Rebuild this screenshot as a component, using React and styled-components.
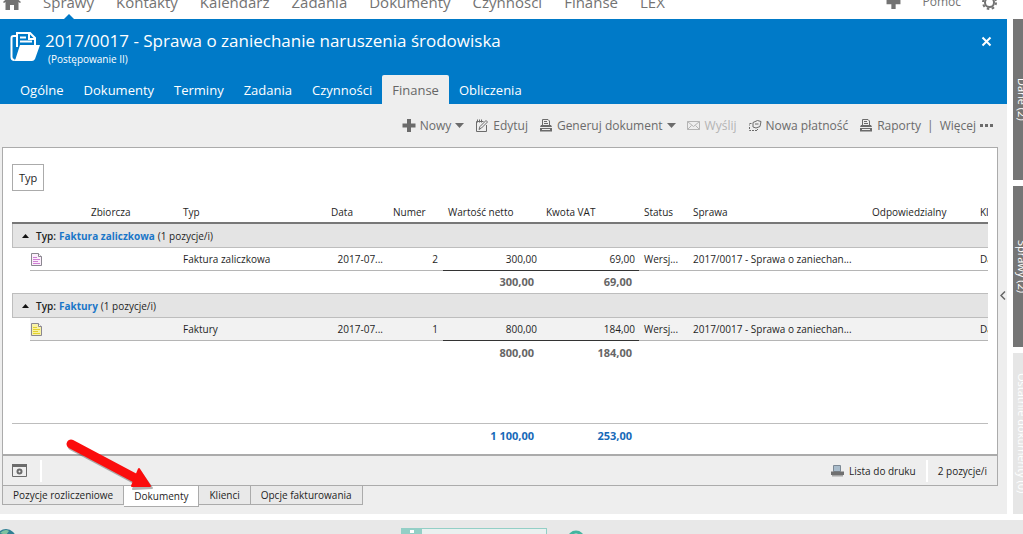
import React, { useState } from 'react'
import styled, { createGlobalStyle, css } from 'styled-components';

const GlobalStyle = createGlobalStyle`
    * { box-sizing: border-box; }
    html, body { margin: 0; background: #fff; overflow: hidden; }
    body { font-family: 'Open Sans', 'Noto Sans', sans-serif; font-size: 10px; line-height: 16px; color: #1e1e1e; }
    button { font: inherit; color: inherit; background: none; border: 0; padding: 0; white-space: nowrap; cursor: pointer; }
    svg { display: block; flex: none; }
`;

const TopBar = styled.header`
    display: flex;
    align-items: center;
    justify-content: space-between;
    height: 34px;
    margin-top: -15px;
    padding: 0 26px 0 3px;
    line-height: 20px;
    color: #737373;
`;

const TopGroup = styled.nav`
    display: flex;
    align-items: center;
    gap: ${(props) => props.$gap}px;
    font-size: ${(props) => props.$size}px;
`;

const TopLink = styled.a`
    position: relative;
    color: inherit;
    text-decoration: none;
    ${(props) => props.$active && css`
        &::after {
            content: '';
            position: absolute;
            left: 50%;
            bottom: -7px;
            margin-left: -5px;
            border: 5px solid transparent;
            border-top: 0;
            border-bottom-color: #007ac8;
        }
    `}
`;

const Columns = styled.div`
    display: flex;
    gap: 6px;
`;

const Main = styled.main`
    flex: 1;
    min-width: 0;
    display: flex;
    flex-direction: column;
    background: #eeeeee;
`;

const CaseHeader = styled.div`
    display: flex;
    flex-direction: column;
    justify-content: space-between;
    height: 85px;
    padding: 12px 15px 0 10px;
    background: #007ac8;
    color: #fff;
`;

const TitleRow = styled.div`
    display: flex;
    gap: 5px;
`;

const TitleText = styled.div`
    flex: 1;
    h1 { margin: 0; font-size: 17px; line-height: 20px; font-weight: 400; }
    p { margin: 0; padding-left: 3px; line-height: 16px; }
`;

const CloseButton = styled.button`
    align-self: flex-start;
    padding: 5px 0;
`;

const CaseTabs = styled.nav`
    display: flex;
`;

const CaseTab = styled.button`
    height: 29px;
    padding: 0 10px;
    font-size: 13px;
    border-radius: 2px 2px 0 0;
    background: ${(props) => (props.$active ? '#eeeeee' : 'transparent')};
    color: ${(props) => (props.$active ? '#666' : '#fff')};
`;

const Body = styled.div`
    flex: 1;
    display: flex;
`;

const Work = styled.div`
    flex: 1;
    min-width: 0;
    display: flex;
    flex-direction: column;
    padding-left: 2px;
`;

const Gutter = styled.button`
    display: flex;
    align-items: center;
    justify-content: center;
    width: 9px;
    color: #666;
`;

const Toolbar = styled.div`
    display: flex;
    align-items: center;
    justify-content: flex-end;
    gap: 11px;
    height: 43px;
    padding-right: 5px;
    font-size: 12px;
    color: #6b6b6b;
`;

const ToolButton = styled.button`
    display: flex;
    align-items: center;
    gap: 4px;
    &:disabled { color: #b4b4b4; }
`;

const ToolMore = styled.div`
    display: flex;
    gap: 6px;
    margin-left: -5px;
`;

const Panel = styled.section`
    flex: 1;
    display: flex;
    flex-direction: column;
    border: 1px solid #ababab;
`;

const GridArea = styled.div`
    flex: 1;
    padding: 16px 9px 7px;
    background: #fff;
    border-bottom: 2px solid #ababab;
`;

const GroupButton = styled.button`
    height: 27px;
    padding: 0 6px;
    font-size: 11px;
    border: 1px solid #ababab;
`;

const TableClip = styled.div`
    margin-top: 11px;
    overflow: hidden;
`;

const Table = styled.table`
    width: 100%;
    min-width: 1064px;
    table-layout: fixed;
    border-spacing: 0;
    td, th { padding: 0 5px; white-space: nowrap; overflow: hidden; }
`;

const Head = styled.th`
    height: 22px;
    text-align: left;
    font-weight: 400;
    border-bottom: 2px solid #777;
`;

const GroupCell = styled.td`
    height: 24px;
    background: #e4e4e4;
    border: solid #bdbdbd;
    border-width: 0 0 1px 1px;
    button { display: flex; align-items: center; gap: 3px; padding-left: 4px; }
    svg { margin-right: 4px; }
    strong { font-weight: 600; }
    em { font-style: normal; font-weight: 700; color: #1a76c8; }
`;

const Cell = styled.td`
    height: 23px;
    text-align: ${(props) => (props.$right ? 'right' : 'left')};
    background: ${(props) => (props.$alt ? '#f2f2f2' : 'transparent')};
    border-bottom: 1px solid ${(props) => (props.$sum ? '#333' : '#b5b5b5')};
    && { padding-right: ${(props) => (props.$sum ? 4 : 5)}px; }
`;

const IconCell = styled(Cell)`
    && { padding-left: 1px; }
`;

const Blank = styled.td`
    height: ${(props) => props.$height || 23}px;
    border-bottom: ${(props) => (props.$line ? '1px solid #bdbdbd' : '0')};
`;

const SumCell = styled.td`
    height: 23px;
    && { padding-right: 7px; }
    text-align: right;
    font-size: 11px;
    font-weight: 700;
    color: ${(props) => (props.$total ? '#1769b8' : '#666')};
    border-bottom: ${(props) => (props.$line ? '1px solid #bdbdbd' : '0')};
`;

const StatusBar = styled.footer`
    display: flex;
    align-items: center;
    height: 29px;
    padding: 0 10px 0 9px;
`;

const Divider = styled.span`
    width: 2px;
    height: 22px;
    margin: 0 ${(props) => props.$right || 0}px 0 ${(props) => props.$left}px;
    background: #fff;
`;

const PrintLink = styled.button`
    display: flex;
    align-items: center;
    gap: 5px;
    margin-left: auto;
`;

const BottomTabs = styled.nav`
    position: relative;
    display: flex;
    align-items: flex-start;
    height: 28px;
    padding-left: 2px;
`;

const BottomTab = styled.button`
    height: ${(props) => (props.$active ? 21 : 19)}px;
    padding: 0 10px;
    border: solid #ababab;
    border-width: 0 1px 1px 0;
    background: ${(props) => (props.$active ? '#fff' : '#e9e9e9')};
    &:first-child { border-left-width: 1px; }
`;

const Pointer = styled.svg`
    position: absolute;
    left: 62px;
    bottom: 22px;
    pointer-events: none;
`;

const Side = styled.aside`
    display: flex;
    flex-direction: column;
    gap: 6px;
    width: 10px;
    overflow: hidden;
`;

const SideTab = styled.button`
    flex: 1;
    width: 18px;
    writing-mode: vertical-rl;
    font-size: 11px;
    background: ${(props) => (props.disabled ? '#e6e6e6' : '#757575')};
    color: #fff;
    text-align: center;
`;

const Footer = styled.footer`
    display: flex;
    height: 14px;
    margin-top: 6px;
    padding-top: 8px;
    background: #e8e8e8;
    overflow: hidden;
`;

const InfoBox = styled.div`
    width: 146px;
    height: 20px;
    margin: 0 20px 0 385px;
    border: 1px solid #93cfc6;
    background: #eaf1f0;
`;

const Icon = ({ name, width = 14, height = 13 }) => {
    const shapes = {
        plus: <path d="M5 0h4v4.500h4.500v4H9V13H5V8.500H.5v-4H5z" fill="currentColor" />,
        edit: (
            <g fill="none" stroke="currentColor">
                <path d="M11.500 6v6.500H1.500v-10h7" />
                <path d="M2.500 .5v3M4.500.5v3M6.500 .5v3" />
                <path d="M4 10.500l1-3L11 1.500l1.500 1.500-6 6z" />
            </g>
        ),
        printer: (
            <g>
                <path d="M3.500 6V.5h5.500l1.500 1.500V6M5 2.500h3M5 4.500h4" fill="none" stroke="currentColor" />
                <path d="M2 6h10l1 2v4.500H1V8z" fill="currentColor" />
                <path d="M1 8.500h12M3 10.500h8" stroke="#eee" />
            </g>
        ),
        mail: <path d="M.5 2.500h12v8H.5zM.5 2.500l6 5 6-5M.5 10.500l4-4M12.500 10.500l-4-4" fill="none" stroke="currentColor" />,
        payment: (
            <g fill="none" stroke="currentColor">
                <path d="M5 3.500l4.500-2 3.500 1-1 5-4 1.500-3-1z" />
                <path d="M7 5h3.500" />
                <path d="M3.500 4.500h-2v2M1.500 8v3.500h8V10" strokeDasharray="2 1" />
            </g>
        ),
    };
    return <svg width={width} height={height} viewBox="0 0 14 13" aria-hidden="true">{shapes[name]}</svg>;
};

const Caret = () => (
    <svg width="9" height="5" viewBox="0 0 9 5" aria-hidden="true">
        <path d="M0 0h9L4.500 5z" fill="currentColor" />
    </svg>
);

const FolderIcon = () => (
    <svg width="30" height="31" viewBox="0 0 30 31" aria-hidden="true">
        <g fill="none" stroke="#fff" strokeWidth="2">
            <path d="M6 5H3.500A2 2 0 0 0 1.500 7v19a3 3 0 0 0 3 3" />
            <path d="M7 16V2h13l5 5v7M19 2v6h6" />
            <path d="M10 6.500h6M10 10.500h12" />
        </g>
        <path d="M10 14h20l-5 14q-1 2-3 2H3q2-.5 2.500-2z" fill="#fff" />
    </svg>
);

const DocIcon = ({ color, tint }) => (
    <svg width="11" height="13" viewBox="0 0 11 13" aria-hidden="true">
        <path d="M.5.5h7l3 3v9H.5z" fill={tint} stroke="#8b8790" />
        <path d="M7.500.5v3h3" fill="#fff" stroke="#8b8790" />
        <path d="M2 4.500h4M2 6.500h7M2 8.500h5M2 10.500h7" stroke={color} />
    </svg>
);

const columns = [18, 56, 92, 148, 62, 55, 98, 98, 49, 179, 108, 101];
const headers = ['', '', 'Zbiorcza', 'Typ', 'Data', 'Numer', 'Wartość netto', 'Kwota VAT', 'Status', 'Sprawa', 'Odpowiedzialny', 'Klient'];

const groups = [
    { type: 'Faktura zaliczkowa', number: 2, net: '300,00', vat: '69,00', color: '#cf7fd4', tint: '#fbeefb', line: true },
    { type: 'Faktury', number: 1, net: '800,00', vat: '184,00', color: '#e3d02c', tint: '#f8f2a6', alt: true },
];

const topLinks = ['Sprawy', 'Kontakty', 'Kalendarz', 'Zadania', 'Dokumenty', 'Czynności', 'Finanse', 'LEX'];
const caseTabs = ['Ogólne', 'Dokumenty', 'Terminy', 'Zadania', 'Czynności', 'Finanse', 'Obliczenia'];
const bottomTabs = ['Pozycje rozliczeniowe', 'Dokumenty', 'Klienci', 'Opcje fakturowania'];

const InvoiceGroup = ({ group }) => {
    const { type, number, net, vat, color, tint, alt, line } = group;
    return (
        <tbody>
            <tr>
                <GroupCell colSpan={12}>
                    <button>
                        <svg width="7" height="4" viewBox="0 0 7 4" aria-hidden="true"><path d="M0 4l3.500-4L7 4z" fill="#111" /></svg>
                        <strong>Typ:</strong> <em>{type}</em> (1 pozycje/i)
                    </button>
                </GroupCell>
            </tr>
            <tr>
                <td></td>
                <IconCell $alt={alt}><DocIcon color={color} tint={tint} /></IconCell>
                <Cell $alt={alt}></Cell>
                <Cell $alt={alt}>{type}</Cell>
                <Cell $alt={alt} $right>2017-07...</Cell>
                <Cell $alt={alt} $right>{number}</Cell>
                <Cell $alt={alt} $right $sum>{net}</Cell>
                <Cell $alt={alt} $right $sum>{vat}</Cell>
                <Cell $alt={alt}>Wersj...</Cell>
                <Cell $alt={alt}>2017/0017 - Sprawa o zaniechan...</Cell>
                <Cell $alt={alt}></Cell>
                <Cell $alt={alt}>Dane</Cell>
            </tr>
            <tr>
                <Blank colSpan={6} $line={line} />
                <SumCell $line={line}>{net}</SumCell>
                <SumCell $line={line}>{vat}</SumCell>
                <Blank colSpan={4} $line={line} />
            </tr>
        </tbody>
    );
};

const App = () => {

    const [caseTab, setCaseTab] = useState('Finanse');
    const [bottomTab, setBottomTab] = useState('Dokumenty');

    return (
        <>
            <GlobalStyle />
            <TopBar>
                <TopGroup $gap={22} $size={15}>
                    <TopLink href="#" aria-label="Start">
                        <svg width="18" height="16" viewBox="0 0 18 16"><path d="M9 0L0 8l1 1 1.500-1v8H7v-5h4v5h4.500V8L17 9l1-1-3-2.500V1h-2v2.500z" fill="currentColor" /></svg>
                    </TopLink>
                    {topLinks.map((link) => (
                        <TopLink key={link} href="#" $active={link === 'Sprawy'}>{link}</TopLink>
                    ))}
                </TopGroup>
                <TopGroup $gap={21} $size={12}>
                    <TopLink href="#" aria-label="Dodaj"><Icon name="plus" width={15} height={14} /></TopLink>
                    <TopLink href="#">Pomoc</TopLink>
                    <TopLink href="#" aria-label="Ustawienia">
                        <svg width="15" height="15" viewBox="0 0 15 15">
                            <circle cx="7.500" cy="7.500" r="4.500" fill="none" stroke="currentColor" strokeWidth="2" />
                            <circle cx="7.500" cy="7.500" r="6.500" fill="none" stroke="currentColor" strokeWidth="2" strokeDasharray="2.550 2.550" />
                        </svg>
                    </TopLink>
                </TopGroup>
            </TopBar>
            <Columns>
                <Main>
                    <CaseHeader>
                        <TitleRow>
                            <FolderIcon />
                            <TitleText>
                                <h1>2017/0017 - Sprawa o zaniechanie naruszenia środowiska</h1>
                                <p>(Postępowanie II)</p>
                            </TitleText>
                            <CloseButton aria-label="Zamknij">
                                <svg width="11" height="11" viewBox="0 0 11 11"><path d="M1.500 1.500l8 8M9.500 1.500l-8 8" stroke="#fff" strokeWidth="2" /></svg>
                            </CloseButton>
                        </TitleRow>
                        <CaseTabs>
                            {caseTabs.map((tab) => (
                                <CaseTab key={tab} $active={tab === caseTab} onClick={() => setCaseTab(tab)}>{tab}</CaseTab>
                            ))}
                        </CaseTabs>
                    </CaseHeader>
                    <Body>
                        <Work>
                            <Toolbar>
                                <ToolButton><Icon name="plus" />Nowy <Caret /></ToolButton>
                                <ToolButton><Icon name="edit" />Edytuj</ToolButton>
                                <ToolButton><Icon name="printer" />Generuj dokument <Caret /></ToolButton>
                                <ToolButton disabled><Icon name="mail" />Wyślij</ToolButton>
                                <ToolButton><Icon name="payment" />Nowa płatność</ToolButton>
                                <ToolButton><Icon name="printer" />Raporty</ToolButton>
                                <ToolMore>
                                    <span>|</span>
                                    <ToolButton>
                                        Więcej
                                        <svg width="13" height="3" viewBox="0 0 13 3"><path d="M0 0h3v3H0zM5 0h3v3H5zM10 0h3v3h-3z" fill="currentColor" /></svg>
                                    </ToolButton>
                                </ToolMore>
                            </Toolbar>
                            <Panel>
                                <GridArea>
                                    <GroupButton>Typ</GroupButton>
                                    <TableClip>
                                        <Table>
                                            <colgroup>
                                                {columns.map((width, index) => <col key={index} width={width} />)}
                                            </colgroup>
                                            <thead>
                                                <tr>{headers.map((text, index) => <Head key={index}>{text}</Head>)}</tr>
                                            </thead>
                                            {groups.map((group) => <InvoiceGroup key={group.type} group={group} />)}
                                            <tfoot>
                                                <tr><Blank colSpan={12} $height={60} $line /></tr>
                                                <tr>
                                                    <Blank colSpan={6} />
                                                    <SumCell $total>1 100,00</SumCell>
                                                    <SumCell $total>253,00</SumCell>
                                                    <Blank colSpan={4} />
                                                </tr>
                                            </tfoot>
                                        </Table>
                                    </TableClip>
                                </GridArea>
                                <StatusBar>
                                    <button aria-label="Ustawienia widoku">
                                        <svg width="15" height="13" viewBox="0 0 15 13">
                                            <path d="M.5 1h14v11.500H.5z" fill="none" stroke="#6b6b6b" />
                                            <path d="M0 0h15v3H0z" fill="#6b6b6b" />
                                            <circle cx="7.500" cy="7.500" r="2" fill="none" stroke="#6b6b6b" strokeWidth="2" />
                                        </svg>
                                    </button>
                                    <Divider $left={13} />
                                    <PrintLink>
                                        <svg width="13" height="12" viewBox="0 0 13 12" aria-hidden="true">
                                            <path d="M2.500.5h7v6h-7z" fill="#a9bccb" stroke="#7c8894" />
                                            <path d="M0 6.500h13V10H0z" fill="#707070" />
                                            <path d="M1 10h11v1.500H1z" fill="#a5a5a5" />
                                        </svg>
                                        Lista do druku
                                    </PrintLink>
                                    <Divider $left={10} $right={10} />
                                    <span>2 pozycje/i</span>
                                </StatusBar>
                            </Panel>
                        </Work>
                        <Gutter aria-label="Rozwiń panel">
                            <svg width="6" height="9" viewBox="0 0 6 9"><path d="M5 .5l-4 4 4 4" fill="none" stroke="currentColor" strokeWidth="1.500" /></svg>
                        </Gutter>
                    </Body>
                    <BottomTabs>
                        {bottomTabs.map((tab) => (
                            <BottomTab key={tab} $active={tab === bottomTab} onClick={() => setBottomTab(tab)}>{tab}</BottomTab>
                        ))}
                        <Pointer width="96" height="60" viewBox="0 0 96 60" aria-hidden="true">
                            <g transform="translate(1 2)" opacity=".4">
                                <path d="M9 12l64 34" stroke="#444" strokeWidth="9" strokeLinecap="round" />
                                <path d="M89 54L77 37 70 55z" fill="#444" stroke="#444" strokeWidth="2" strokeLinejoin="round" />
                            </g>
                            <path d="M9 12l64 34" stroke="#fb0d0d" strokeWidth="9" strokeLinecap="round" />
                            <path d="M88 54L77 37 70 54z" fill="#fb0d0d" stroke="#fb0d0d" strokeWidth="2" strokeLinejoin="round" />
                        </Pointer>
                    </BottomTabs>
                </Main>
                <Side>
                    <SideTab>Dane (2)</SideTab>
                    <SideTab>Sprawy (2)</SideTab>
                    <SideTab disabled>Ostatnie dokumenty (0)</SideTab>
                </Side>
            </Columns>
            <Footer>
                <svg width="16" height="16" viewBox="0 0 16 16" aria-hidden="true">
                    <circle cx="6" cy="11" r="10" fill="#2f7f94" />
                    <path d="M0 5q5-5 9-2l-3 4z" fill="#7fc3a0" />
                </svg>
                <InfoBox>
                    <svg width="20" height="20" viewBox="0 0 20 20" aria-hidden="true">
                        <path d="M0 0h20v20H0z" fill="#93cfc6" />
                        <path d="M8 1h4v3H8zM7 6h5v9H8z" fill="#fff" />
                    </svg>
                </InfoBox>
                <svg width="18" height="18" viewBox="0 0 18 18" aria-hidden="true">
                    <circle cx="9" cy="11" r="7" fill="none" stroke="#43b59f" strokeWidth="3" />
                </svg>
            </Footer>
        </>
    );
}

export default App
